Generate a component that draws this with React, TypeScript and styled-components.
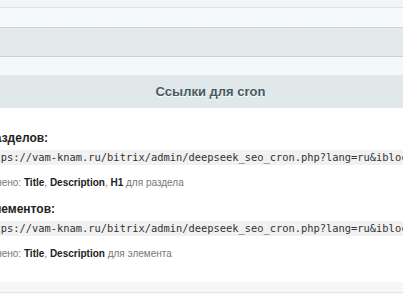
import React from "react";
import styled, { createGlobalStyle } from "styled-components";

const Global = createGlobalStyle`
  html, body { margin: 0; padding: 0; background: #ffffff; }
  body { overflow: hidden; font-family: "Liberation Sans", Arial, sans-serif; }
`;

const Viewport = styled.div`
  width: 403px;
  height: 294px;
  overflow: hidden;
  background: #ffffff;
`;

const Sheet = styled.div`
  width: 501px;
  margin-left: -40px;
  display: flex;
  flex-direction: column;
`;

const Strip = styled.div<{ $h: number; $bg: string; $line?: string }>`
  height: ${(p) => p.$h}px;
  background: ${(p) => p.$bg};
  border-bottom: ${(p) => (p.$line ? `1px solid ${p.$line}` : "none")};
`;

const TabBand = styled.div`
  height: 28px;
  background-color: #e2e9eb;
  background-image: repeating-linear-gradient(
    90deg,
    rgba(255, 255, 255, 0.12) 0px,
    rgba(255, 255, 255, 0.12) 1px,
    rgba(0, 0, 0, 0) 1px,
    rgba(0, 0, 0, 0) 3px
  );
  border-bottom: 1px solid #c9d3d6;
`;

const Heading = styled.div`
  height: 33px;
  line-height: 33px;
  background: #e0e8ea;
  color: #4a5960;
  font-size: 13px;
  font-weight: bold;
  text-align: center;
  text-shadow: 0 1px #ffffff;
`;

const Body = styled.div`
  display: flex;
  flex-direction: column;
  padding: 23px 0 22px 0;
  background: #ffffff;
`;

const Label = styled.div<{ $first?: boolean }>`
  margin: ${(p) => (p.$first ? "0" : "13px")} 0 0 1px;
  font-size: 12px;
  line-height: 15px;
  font-weight: bold;
  color: #222222;
  white-space: nowrap;
`;

const Code = styled.div`
  margin: 4px 0 0 18px;
  padding: 1px 4px;
  background: #f1f1f1;
  font-family: "DejaVu Sans Mono", "Liberation Mono", monospace;
  font-size: 10.4px;
  line-height: 13px;
  color: #333333;
  white-space: nowrap;
`;

const Note = styled.div`
  margin: 12px 0 0 8px;
  font-size: 10px;
  line-height: 12px;
  color: #777777;
  white-space: nowrap;
`;

const Field = styled.b`
  color: #222222;
  font-weight: bold;
`;

type Item = { label: string; url: string; fields: string[]; target: string };

const items: Item[] = [
  {
    label: "Для разделов:",
    url: "https://vam-knam.ru/bitrix/admin/deepseek_seo_cron.php?lang=ru&iblock_id=1&type=section",
    fields: ["Title", "Description", "H1"],
    target: "для раздела",
  },
  {
    label: "Для элементов:",
    url: "https://vam-knam.ru/bitrix/admin/deepseek_seo_cron.php?lang=ru&iblock_id=1&type=element",
    fields: ["Title", "Description"],
    target: "для элемента",
  },
];

export default function App() {
  return (
    <>
      <Global />
      <Viewport>
        <Sheet>
          <Strip $h={7} $bg="#f2f6f7" $line="#dce3e5" />
          <Strip $h={19} $bg="#f6f9fa" $line="#cdd6d9" />
          <TabBand />
          <Strip $h={18} $bg="#f5f8f9" />
          <Heading>Ссылки для cron</Heading>
          <Body>
            {items.map((it, i) => (
              <React.Fragment key={it.label}>
                <Label $first={i === 0}>{it.label}</Label>
                <Code>{it.url}</Code>
                <Note>
                  Заполнено:{" "}
                  {it.fields.map((f, j) => (
                    <React.Fragment key={f}>
                      <Field>{f}</Field>
                      {j < it.fields.length - 1 ? ", " : " "}
                    </React.Fragment>
                  ))}
                  {it.target}
                </Note>
              </React.Fragment>
            ))}
          </Body>
          <Strip $h={10} $bg="#f5f8f9" $line="#e1e7e9" />
          <Strip $h={20} $bg="#f9fbfb" />
        </Sheet>
      </Viewport>
    </>
  );
}
